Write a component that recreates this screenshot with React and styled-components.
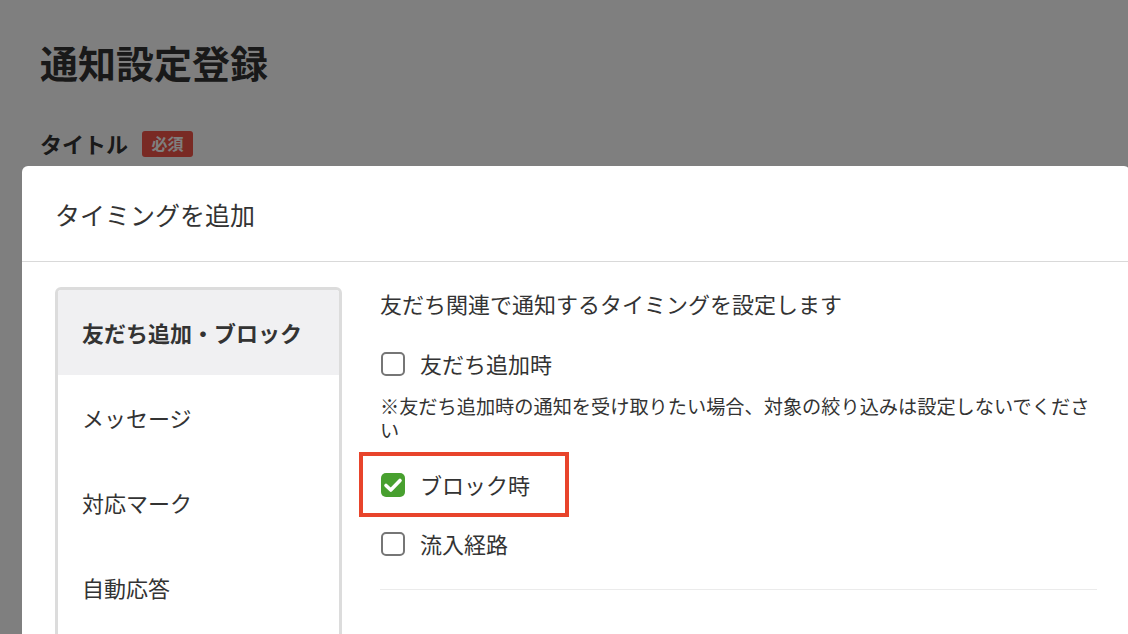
import styled, { createGlobalStyle } from "styled-components";

const GlobalStyle = createGlobalStyle`
  html, body {
    margin: 0;
    padding: 0;
    background: #fff;
    overflow: hidden;
  }
  body {
    font-family: "Noto Sans CJK JP", "Noto Sans", sans-serif;
    color: #333;
  }
`;

const menuItems = ["友だち追加・ブロック", "メッセージ", "対応マーク", "自動応答"];

function Checkbox({ checked }) {
  return (
    <Box checked={checked}>
      {checked && (
        <svg width="24" height="24" viewBox="0 0 24 24">
          <polyline
            points="5,12.5 9.8,17 19,7.5"
            fill="none"
            stroke="#fff"
            strokeWidth="3.6"
            strokeLinecap="round"
            strokeLinejoin="round"
          />
        </svg>
      )}
    </Box>
  );
}

export default function App() {
  return (
    <>
      <GlobalStyle />
      <Page>
        <PageTitle>通知設定登録</PageTitle>
        <FieldLabel>
          タイトル
          <Required>必須</Required>
        </FieldLabel>
      </Page>
      <Overlay>
        <Modal>
          <ModalHeader>タイミングを追加</ModalHeader>
          <ModalBody>
            <Sidebar>
              {menuItems.map((item, i) => (
                <MenuItem key={item} active={i === 0}>
                  {item}
                </MenuItem>
              ))}
            </Sidebar>
            <Content>
              <Description>友だち関連で通知するタイミングを設定します</Description>
              <Option>
                <Checkbox />
                友だち追加時
              </Option>
              <Note>
                ※友だち追加時の通知を受け取りたい場合、対象の絞り込みは設定しないでください
              </Note>
              <Highlight>
                <Option>
                  <Checkbox checked />
                  ブロック時
                </Option>
              </Highlight>
              <Option>
                <Checkbox />
                流入経路
              </Option>
              <Divider />
            </Content>
          </ModalBody>
        </Modal>
      </Overlay>
    </>
  );
}

const Page = styled.div`
  padding: 33px 40px;
`;

const PageTitle = styled.h1`
  margin: 0;
  font-size: 38px;
  font-weight: 700;
  line-height: 57px;
  color: #333;
`;

const FieldLabel = styled.div`
  margin-top: 37px;
  display: flex;
  align-items: center;
  gap: 14px;
  font-size: 22px;
  font-weight: 700;
  line-height: 33px;
`;

const Required = styled.span`
  display: inline-flex;
  align-items: center;
  justify-content: center;
  width: 51px;
  height: 26px;
  border-radius: 3px;
  background: #f25448;
  color: #fff;
  font-size: 16px;
  font-weight: 700;
`;

const Overlay = styled.div`
  position: fixed;
  inset: 0;
  background: rgba(0, 0, 0, 0.5);
`;

const Modal = styled.div`
  position: absolute;
  top: 166px;
  left: 22px;
  width: 1108px;
  min-height: 600px;
  background: #fff;
  border-radius: 6px;
`;

const ModalHeader = styled.div`
  height: 96px;
  box-sizing: border-box;
  padding: 0 33px;
  display: flex;
  align-items: center;
  font-size: 25px;
  color: #333;
  border-bottom: 1px solid #d9d9d9;
`;

const ModalBody = styled.div`
  display: flex;
  gap: 38px;
  padding: 25px 33px 0;
`;

const Sidebar = styled.div`
  width: 287px;
  min-height: 420px;
  box-sizing: border-box;
  border: 3px solid #dcdcdc;
  border-radius: 6px;
  overflow: hidden;
  flex-shrink: 0;
`;

const MenuItem = styled.div`
  padding: 26px 24px;
  font-size: 22px;
  line-height: 33px;
  font-weight: ${({ active }) => (active ? 700 : 400)};
  background: ${({ active }) => (active ? "#f0f0f2" : "transparent")};
  color: #333;
`;

const Content = styled.div`
  flex: 1;
  display: flex;
  flex-direction: column;
  align-items: flex-start;
`;

const Description = styled.p`
  margin: 0 0 27px;
  font-size: 22px;
  line-height: 33px;
`;

const Option = styled.label`
  display: flex;
  align-items: center;
  gap: 15px;
  font-size: 22px;
  line-height: 33px;
  padding-left: 1px;
`;

const Box = styled.span`
  width: 24px;
  height: 24px;
  box-sizing: border-box;
  border-radius: 5px;
  border: ${({ checked }) => (checked ? "none" : "2px solid #767676")};
  background: ${({ checked }) => (checked ? "#48a02f" : "#fff")};
  display: inline-flex;
  align-items: center;
  justify-content: center;
`;

const Note = styled.p`
  margin: 14px 0 10px;
  font-size: 19.2px;
  line-height: 24px;
`;

const Highlight = styled.div`
  margin: 0 0 10px -21px;
  padding: 12px 35px 12px 17px;
  border: 4px solid #e8442b;
`;

const Divider = styled.hr`
  align-self: stretch;
  margin: 29px 0 0;
  border: none;
  border-top: 1px solid #ebebeb;
`;
